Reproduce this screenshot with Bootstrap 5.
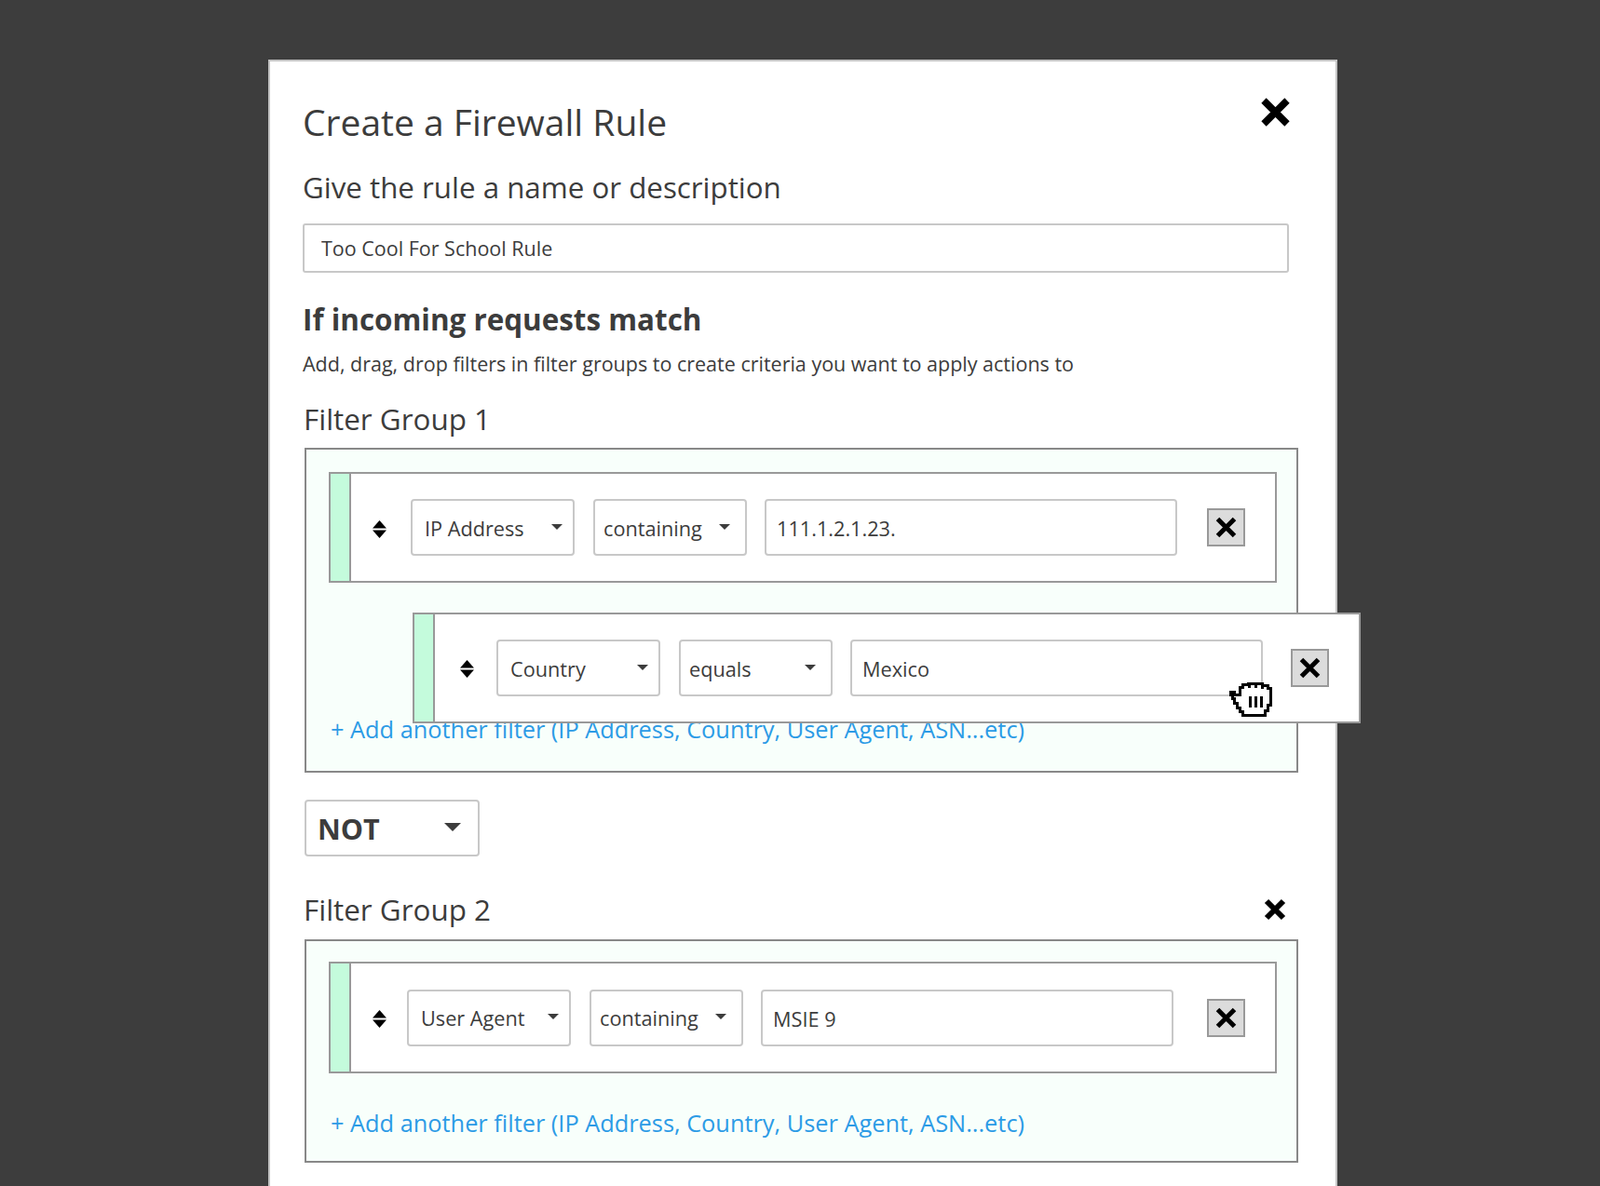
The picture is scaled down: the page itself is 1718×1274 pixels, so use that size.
<!DOCTYPE html>
<html lang="en">
<head>
    <meta charset="UTF-8">
    <meta name="viewport" content="width=device-width, initial-scale=1.0">
    <title>Create a Firewall Rule</title>
    <link href="https://cdn.jsdelivr.net/npm/bootstrap@5.3.0/dist/css/bootstrap.min.css" rel="stylesheet">
    <style>
        html, body { height: 1274px; overflow: hidden; }
        body { background-color: #3d3d3d; font-family: "Open Sans", "Noto Sans", sans-serif; color: #3c3c3c; }
        .rule-panel { width: 1148px; margin: 64px 0 0 288px; padding: 41px 0 60px 35px; background: #fff; border: 2px solid #c4c4c4; }
        .rule-inner { width: 1069px; }
        .rule-title { font-size: 39px; line-height: 48px; margin: 0; font-weight: 400; color: #3c3c3c; }
        .rule-sub { font-size: 31.3px; line-height: 40px; margin: 26px 0 19px; font-weight: 400; }
        .name-input.form-control { width: 1059px; height: 53px; padding: 0 18px; font-size: 21.5px; color: #3c3c3c; border: 2px solid #c8c8c8; border-radius: 3px; }
        .rule-heading { font-size: 31.4px; line-height: 40px; font-weight: 700; margin: 30px 0 13px; }
        .rule-desc { font-size: 21.5px; line-height: 30px; margin: 0 0 24px; }
        .group-label { font-size: 31.4px; line-height: 40px; margin: 0 0 11px 1px; width: 1068px; }
        .group-label.second { margin-bottom: 12px; }
        .group-box { position: relative; width: 1067px; margin-left: 2px; padding: 24px 20px 0 24px; background: #f8fffb; border: 2px solid #888; }
        .group-box.second { padding-top: 22px; }
        .filter-row { display: flex; align-items: center; width: 1018px; height: 119px; background: #fff; border: 2px solid #999; }
        .filter-grip { align-self: stretch; width: 22px; flex: none; background: #c4fbdc; border-right: 2px solid #999; }
        .sort-arrows { flex: none; width: 15px; height: 19px; margin: 3px 26px 0 23px; }
        .filter-row.tight { height: 120px; }
        .filter-row.tight .sort-arrows { margin: 2px 22px 0 23px; }
        .filter-row.dragged { position: absolute; left: 114px; top: 175px; width: 1018px; }
        .filter-row.dragged .sort-arrows { margin: 2px 24px 0 27px; }
        .pick-btn.btn { display: flex; align-items: center; justify-content: space-between; flex: none; height: 61px; color: #3c3c3c; background: #fff; border: 2px solid #c8c8c8; border-radius: 4px; font-size: 21.7px; }
        .pick-btn.dropdown-toggle::after { margin-top: -5px; }
        .pick-field.btn { width: 176px; padding: 3px 11px 0 13px; }
        .pick-op.btn { width: 165px; padding: 3px 16px 0 9px; margin-left: 20px; }
        .pick-join.btn { width: 188px; margin: 29px 0 37px 2px; padding: 3px 18px 0 12px; font-size: 30.5px; font-weight: 700; }
        .value-input.form-control { flex: none; width: 443px; height: 61px; margin-left: 19px; padding: 2px 11px 0; font-size: 21.7px; color: #3c3c3c; border: 2px solid #c8c8c8; border-radius: 4px; }
        .drop-x.btn { flex: none; display: flex; align-items: center; justify-content: center; width: 41px; height: 41px; margin: 0 32px 0 auto; padding: 0; background: #dcdcdc; border: 2px solid #999; border-radius: 0; }
        .add-link { display: block; font-size: 25.35px; line-height: 36px; color: #2c9be6; text-decoration: none; margin: 35px 0 0 2px; padding-bottom: 23px; }
        .drop-gap { height: 139px; }
        .drop-gap + .add-link { margin-top: 0; padding-bottom: 27px; }
        .grab-hand { position: absolute; left: 991px; top: 250px; }
    </style>
</head>
<body>
    <div class="rule-panel">
        <div class="rule-inner">
            <div class="d-flex justify-content-between align-items-start">
                <h1 class="rule-title">Create a Firewall Rule</h1>
                <svg class="me-2" width="33" height="33" viewBox="0 0 33 33" style="margin-top:-3px"><path d="M4 4 29 29M29 4 4 29" stroke="#000" stroke-width="7.5"/></svg>
            </div>
            <h2 class="rule-sub">Give the rule a name or description</h2>
            <input class="form-control name-input" type="text" value="Too Cool For School Rule">
            <h3 class="rule-heading">If incoming requests match</h3>
            <p class="rule-desc">Add, drag, drop filters in filter groups to create criteria you want to apply actions to</p>

            <div class="group-label">Filter Group 1</div>
            <div class="group-box">
                <div class="filter-row">
                    <div class="filter-grip"></div>
                    <svg class="sort-arrows" viewBox="0 0 15 19"><path d="M7.5 0 15 8.5H0ZM0 10.5H15L7.5 19Z"/></svg>
                    <button type="button" class="btn pick-btn pick-field dropdown-toggle">IP Address</button>
                    <button type="button" class="btn pick-btn pick-op dropdown-toggle">containing</button>
                    <input class="form-control value-input" type="text" value="111.1.2.1.23.">
                    <button type="button" class="btn drop-x"><svg width="23" height="23" viewBox="0 0 23 23"><path d="M2.5 2.5 20.5 20.5M20.5 2.5 2.5 20.5" stroke="#000" stroke-width="5"/></svg></button>
                </div>
                <div class="drop-gap"></div>
                <a class="add-link" href="#">+ Add another filter (IP Address, Country, User Agent, ASN...etc)</a>
                <div class="filter-row dragged">
                    <div class="filter-grip"></div>
                    <svg class="sort-arrows" viewBox="0 0 15 19"><path d="M7.5 0 15 8.5H0ZM0 10.5H15L7.5 19Z"/></svg>
                    <button type="button" class="btn pick-btn pick-field dropdown-toggle">Country</button>
                    <button type="button" class="btn pick-btn pick-op dropdown-toggle">equals</button>
                    <input class="form-control value-input" type="text" value="Mexico">
                    <button type="button" class="btn drop-x"><svg width="23" height="23" viewBox="0 0 23 23"><path d="M2.5 2.5 20.5 20.5M20.5 2.5 2.5 20.5" stroke="#000" stroke-width="5"/></svg></button>
                </div>
                <svg class="grab-hand" width="46" height="38" viewBox="0 0 46 38" shape-rendering="crispEdges">
                    <path d="M1 10H5V13H11V5H14V2H20V1H35V3H41V6H44V24H41V30H38V35H14V31H11V27H8V22H5V17H3V13H1Z" fill="#fff" stroke="#000" stroke-width="3"/>
                    <path d="M22 15V27M28 15V27M34 15V27M21 2V6M28 2V6M35 3V7" stroke="#000" stroke-width="3"/>
                </svg>
            </div>

            <button type="button" class="btn pick-btn pick-join dropdown-toggle">NOT</button>

            <div class="group-label second d-flex justify-content-between align-items-center">
                <span>Filter Group 2</span>
                <svg width="24" height="24" viewBox="0 0 24 24" style="margin-right:13px"><path d="M3 3 21 21M21 3 3 21" stroke="#000" stroke-width="6"/></svg>
            </div>
            <div class="group-box second">
                <div class="filter-row tight">
                    <div class="filter-grip"></div>
                    <svg class="sort-arrows" viewBox="0 0 15 19"><path d="M7.5 0 15 8.5H0ZM0 10.5H15L7.5 19Z"/></svg>
                    <button type="button" class="btn pick-btn pick-field dropdown-toggle">User Agent</button>
                    <button type="button" class="btn pick-btn pick-op dropdown-toggle">containing</button>
                    <input class="form-control value-input" type="text" value="MSIE 9">
                    <button type="button" class="btn drop-x"><svg width="23" height="23" viewBox="0 0 23 23"><path d="M2.5 2.5 20.5 20.5M20.5 2.5 2.5 20.5" stroke="#000" stroke-width="5"/></svg></button>
                </div>
                <a class="add-link" href="#">+ Add another filter (IP Address, Country, User Agent, ASN...etc)</a>
            </div>
        </div>
    </div>
    <script src="https://cdn.jsdelivr.net/npm/bootstrap@5.3.0/dist/js/bootstrap.bundle.min.js"></script>
</body>
</html>
